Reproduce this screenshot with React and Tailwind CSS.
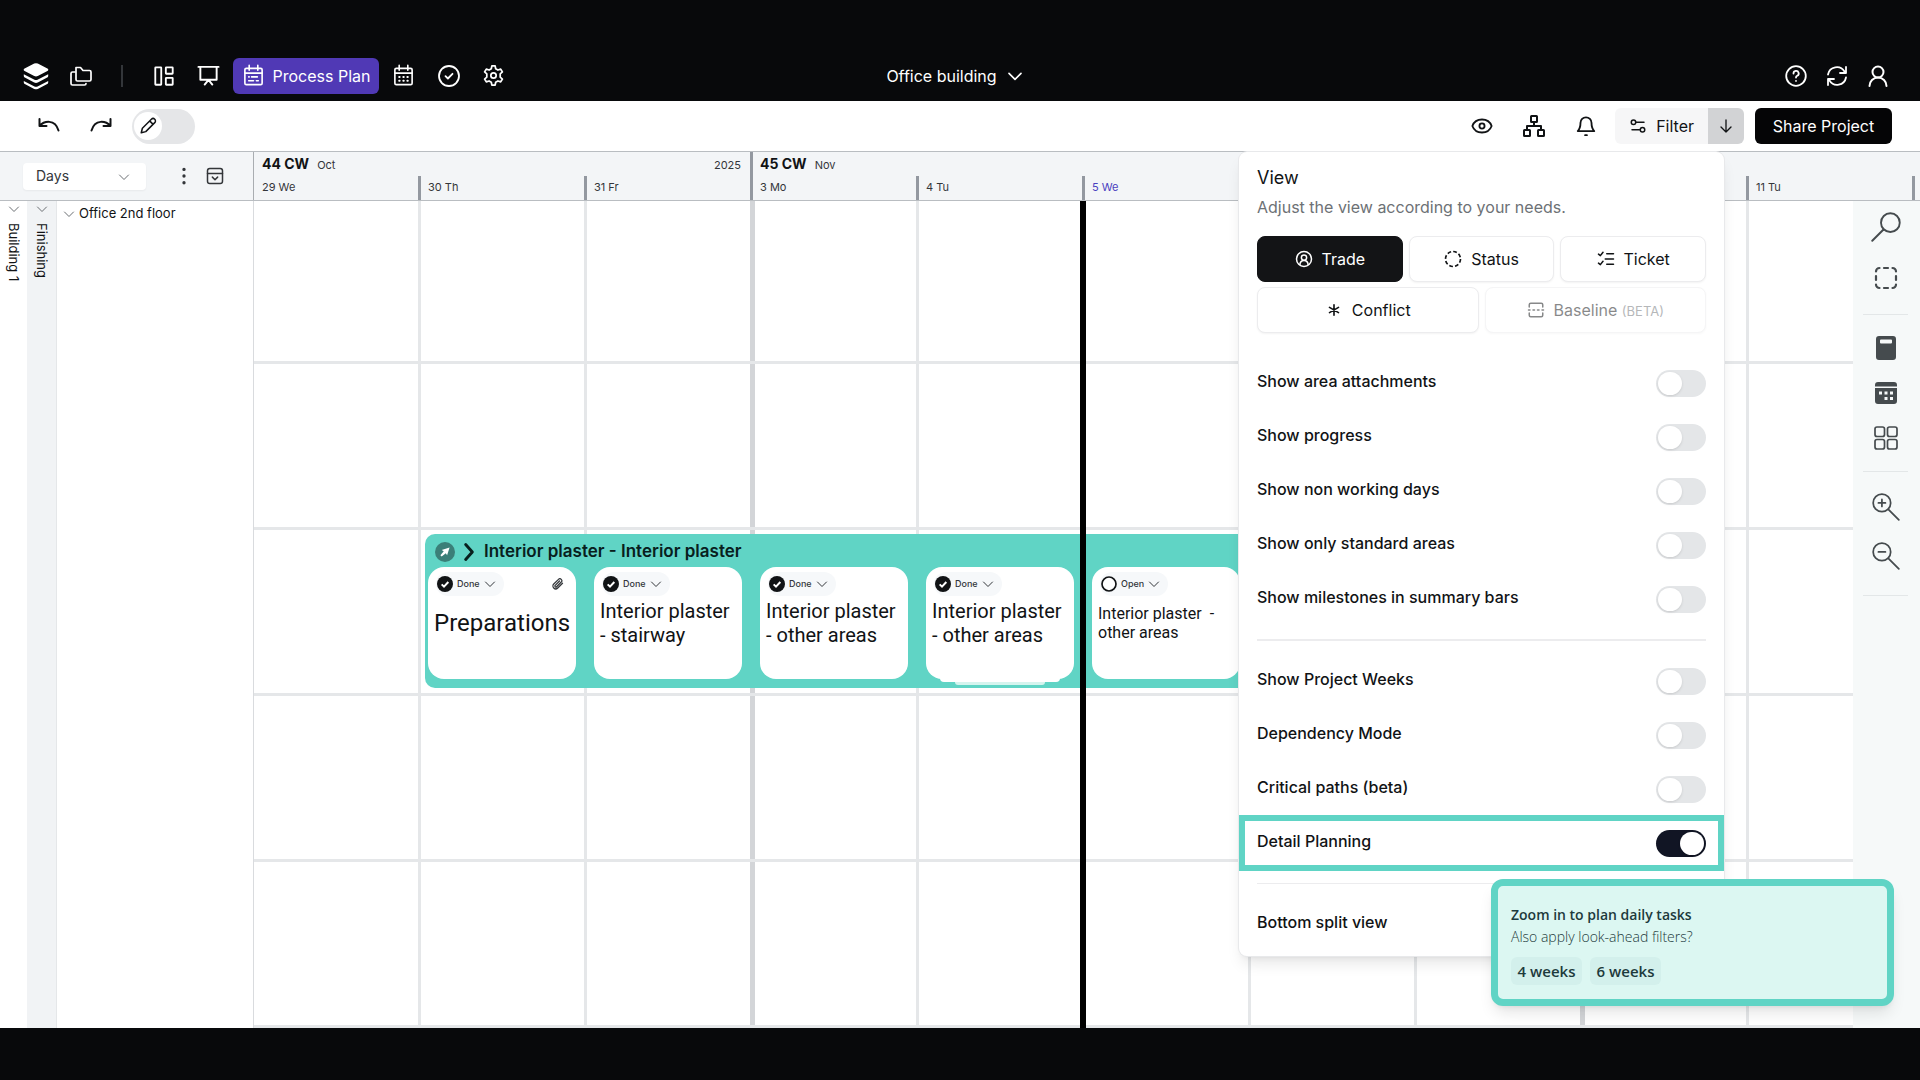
import React, { useState } from 'react';

const days = [
  { id: 29, label: '29 We', week: '44 CW', month: 'Oct' },
  { id: 30, label: '30 Th' },
  { id: 31, label: '31 Fr', year: '2025' },
  { id: 3, label: '3 Mo', week: '45 CW', month: 'Nov', monday: true },
  { id: 4, label: '4 Tu' },
  { id: 5, label: '5 We', today: true },
  { id: 6 },
  { id: 7 },
  { id: 10, monday: true },
  { id: 11, label: '11 Tu' },
  { id: 12 },
];

const rows = [0, 1, 2, 3, 4];

const tasks = [
  { title: 'Preparations', status: 'Done', size: 'large', attachment: true },
  { title: 'Interior plaster - stairway', status: 'Done' },
  { title: 'Interior plaster - other areas', status: 'Done' },
  { title: 'Interior plaster - other areas', status: 'Done', stacked: true },
  { title: 'Interior plaster  - other areas', status: 'Open', size: 'small' },
];

const titleClasses = {
  large: 'pt-[11px] text-2xl leading-8',
  normal: 'pt-[3px] text-xl leading-6',
  small: 'pt-2 text-base leading-[19px]',
};

const viewOptions = [
  { id: 'attachments', label: 'Show area attachments' },
  { id: 'progress', label: 'Show progress' },
  { id: 'nonWorking', label: 'Show non working days' },
  { id: 'standard', label: 'Show only standard areas' },
  { id: 'milestones', label: 'Show milestones in summary bars' },
];

const modeOptions = [
  { id: 'projectWeeks', label: 'Show Project Weeks' },
  { id: 'dependency', label: 'Dependency Mode' },
  { id: 'critical', label: 'Critical paths (beta)' },
  { id: 'detail', label: 'Detail Planning', highlight: true },
];

function Icon({ className = 'size-6', width = 2, children }) {
  return (
    <svg viewBox="0 0 24 24" className={className} fill="none" stroke="currentColor" strokeWidth={width} strokeLinecap="round" strokeLinejoin="round" aria-hidden="true">
      {children}
    </svg>
  );
}

function Chevron({ className, width = 2 }) {
  return (
    <Icon className={className} width={width}>
      <path d="M3 8l9 9 9-9" />
    </Icon>
  );
}

function NavButton({ label, children }) {
  return (
    <button type="button" aria-label={label} className="w-[45px] h-[38px] flex items-center justify-center">
      {children}
    </button>
  );
}

function Header() {
  return (
    <header className="h-[101px] pt-[50px] pl-[23px] pr-[30px] flex items-center bg-[#08090b] text-white text-base">
      <nav className="flex-1 flex items-center">
        <svg viewBox="0 0 26 28" className="w-[26px] h-7 shrink-0" fill="currentColor" aria-hidden="true">
          <path d="M11.2 1.6a4 4 0 0 1 3.6 0l9.6 4.8c1.2.6 1.2 2 0 2.700l-9.600 4.900a4 4 0 0 1-3.600 0L1.600 9.100c-1.200-.7-1.200-2.100 0-2.700z" />
          <path d="M.8 12.200l10.200 5.300a4.300 4.300 0 0 0 4 0l10.200-5.300v1.800c0 .8-.4 1.300-1 1.600l-9.400 4.900a4 4 0 0 1-3.600 0l-9.400-4.900c-.6-.3-1-.8-1-1.600z" />
          <path d="M.8 18.900l10.200 5.300a4.300 4.300 0 0 0 4 0l10.200-5.300v1.600c0 .8-.4 1.300-1 1.600l-9.400 4.800a4 4 0 0 1-3.600 0l-9.400-4.800c-.6-.3-1-.8-1-1.600z" />
        </svg>
        <div className="ml-[9px]">
          <NavButton label="Projects">
            <Icon className="size-6" width={1.700}>
              <path d="M7 3.500h4.500l2.500 3h6.500a1.500 1.500 0 0 1 1.500 1.500v7.500a1.500 1.500 0 0 1-1.500 1.500H8.500A1.500 1.500 0 0 1 7 15.500z" />
              <path d="M6 8H3.500A1.500 1.500 0 0 0 2 9.500v10A1.500 1.500 0 0 0 3.500 21h12a1.500 1.500 0 0 0 1.500-1.500" />
            </Icon>
          </NavButton>
        </div>
        <span className="mx-[18px] w-[2px] h-[22px] bg-[#33363a]" />
        <NavButton label="Dashboard">
          <Icon className="size-[22px]" width={2}>
            <rect x="2.500" y="2.500" width="6.500" height="19" rx="0.500" />
            <rect x="14" y="2.500" width="7.500" height="7" rx="0.500" />
            <rect x="14" y="14" width="7.500" height="7.500" rx="0.500" />
          </Icon>
        </NavButton>
        <NavButton label="Presentation">
          <Icon className="size-[23px]" width={2}>
            <path d="M1.500 3h21M3.500 3v13.500h17V3M12 16.500L8 21.500M12 16.500l4 5" />
          </Icon>
        </NavButton>
        <button type="button" className="mx-[2px] w-[146px] h-[36px] rounded-md bg-[#5039b5] flex items-center justify-center gap-2 whitespace-nowrap">
          <Icon className="size-[23px]" width={1.700}>
            <rect x="3" y="4.500" width="18" height="17" rx="1.500" />
            <path d="M7.500 1.500v5M16.500 1.500v5M3 9.500h18M7 13.500h.5M10 13.500h6M7 17.500h5M15 17.500h2" />
          </Icon>
          Process Plan
        </button>
        <NavButton label="Calendar">
          <Icon className="size-[23px]" width={1.700}>
            <rect x="3" y="4.500" width="18" height="17" rx="1.500" />
            <path d="M7.500 1.500v5M16.500 1.500v5M3 9.500h18" />
            <path d="M7.500 13.500h.5M11.800 13.500h.5M16 13.500h.5M7.500 17.500h.5M11.800 17.500h.5M16 17.500h.5" strokeWidth={2} />
          </Icon>
        </NavButton>
        <NavButton label="Tasks">
          <Icon className="size-6" width={1.800}>
            <circle cx="12" cy="12" r="10" />
            <path d="M8.500 12.200l2.400 2.300 4.600-4.700" />
          </Icon>
        </NavButton>
        <NavButton label="Settings">
          <Icon className="size-[23px]" width={1.800}>
            <path d="M10.300 2h3.400l.6 3 2.300 1.300 2.900-1 1.800 3-2.300 2v3.400l2.300 2-1.800 3-2.900-1-2.300 1.300-.6 3h-3.400l-.6-3-2.300-1.300-2.900 1-1.800-3 2.300-2v-3.400l-2.300-2 1.800-3 2.900 1L9.700 5z" />
            <circle cx="12" cy="12" r="2.800" />
          </Icon>
        </NavButton>
      </nav>
      <button type="button" className="pr-1 flex items-center gap-[10px]">
        Office building
        <Chevron className="size-4" width={2.500} />
      </button>
      <div className="flex-1 flex items-center justify-end gap-[17px]">
        <button type="button" aria-label="Help">
          <Icon className="size-6" width={1.800}>
            <circle cx="12" cy="12" r="9.800" />
            <path d="M9.500 9.500a2.600 2.600 0 1 1 3.700 2.300c-.8.4-1.200.9-1.200 1.700M12 16.800v.1" />
          </Icon>
        </button>
        <button type="button" aria-label="Refresh">
          <Icon className="size-6" width={1.800}>
            <path d="M3 10.500A9 9 0 0 1 19.500 7.500l1.500 1.500M21 3v6h-6" />
            <path d="M21 13.500A9 9 0 0 1 4.500 16.500L3 15M3 21v-6h6" />
          </Icon>
        </button>
        <button type="button" aria-label="Account">
          <Icon className="size-6" width={2}>
            <circle cx="12" cy="8" r="5.500" />
            <path d="M3.500 22a8.500 8.500 0 0 1 17 0" />
          </Icon>
        </button>
      </div>
    </header>
  );
}

function Toolbar() {
  return (
    <div className="h-[50px] px-7 flex items-center justify-between bg-white text-base text-[#111315]">
      <div className="flex items-center">
        <button type="button" aria-label="Undo" className="w-[42px] flex justify-center">
          <Icon className="size-6" width={2}>
            <path d="M2.500 5v7h7M2.500 12C7 7 18 4.500 21.500 16.500" />
          </Icon>
        </button>
        <button type="button" aria-label="Redo" className="ml-[10px] w-[42px] flex justify-center">
          <Icon className="size-6" width={2}>
            <path d="M21.500 5v7h-7M21.500 12C17 7 6 4.500 2.500 16.500" />
          </Icon>
        </button>
        <label className="ml-[10px] w-[63px] h-[35px] p-[2px] rounded-full bg-[#e5e6e8] flex items-center cursor-pointer">
          <input type="checkbox" className="sr-only" aria-label="Edit mode" />
          <span className="size-7 rounded-full bg-white flex items-center justify-center">
            <Icon className="size-[18px]" width={2}>
              <path d="M3 21l1.500-6L16.500 3a2.700 2.700 0 0 1 4.500 4.500L9 19.500zM14.500 5.500l4 4" />
            </Icon>
          </span>
        </label>
      </div>
      <div className="flex items-center">
        <button type="button" aria-label="View" className="w-[52px] flex justify-center">
          <Icon className="size-[22px]" width={2}>
            <path d="M1.500 12c3.500-9.500 17.500-9.500 21 0-3.500 9.500-17.500 9.500-21 0z" />
            <circle cx="12" cy="12" r="2.800" />
          </Icon>
        </button>
        <button type="button" aria-label="Structure" className="w-[52px] flex justify-center">
          <Icon className="size-6" width={2}>
            <rect x="9" y="2" width="6" height="6" rx="0.500" />
            <rect x="2" y="16" width="6" height="6" rx="0.500" />
            <rect x="16" y="16" width="6" height="6" rx="0.500" />
            <path d="M12 8v4M5 16v-4h14v4" />
          </Icon>
        </button>
        <button type="button" aria-label="Notifications" className="w-[52px] flex justify-center">
          <Icon className="size-[22px]" width={2}>
            <path d="M3 17.500C5.500 15 6 13 6 8.500a6 6 0 0 1 12 0c0 4.500.5 6.500 3 9z" />
            <path d="M11 22h2" />
          </Icon>
        </button>
        <button type="button" className="ml-[3px] px-[14px] h-9 rounded-l-md bg-[#f6f6f7] flex items-center gap-[9px]">
          <Icon className="size-[18px]" width={2}>
            <circle cx="6" cy="7" r="3" />
            <path d="M9.500 7H20M4 17h10" />
            <circle cx="18" cy="17" r="3" />
          </Icon>
          Filter
        </button>
        <button type="button" aria-label="Filter options" className="w-9 h-9 rounded-r-md bg-[#d2d3d5] flex items-center justify-center">
          <Icon className="size-4" width={2}>
            <path d="M12 3v18M4.500 13.500L12 21l7.500-7.500" />
          </Icon>
        </button>
        <button type="button" className="ml-[11px] w-[137px] h-9 rounded-md bg-[#050506] text-white whitespace-nowrap">
          Share Project
        </button>
      </div>
    </div>
  );
}

function TimelineHeader() {
  return (
    <div className="h-[50px] flex bg-[#f3f5f7] border-y border-[#b9bdc1] text-[#33363a] text-[11px]">
      <div className="w-[254px] shrink-0 pl-[23px] flex items-center border-r border-[#a9adb1]">
        <div className="relative">
          <select aria-label="Time scale" className="appearance-none w-[123px] h-[27px] pl-[13px] rounded bg-white text-sm shadow-xs">
            <option>Days</option>
            <option>Weeks</option>
          </select>
          <Chevron className="size-3 absolute right-4 top-2 pointer-events-none text-[#6b6f73]" width={2} />
        </div>
        <button type="button" aria-label="More" className="ml-[28px] w-5 flex justify-center">
          <Icon className="size-5" width={4}>
            <path d="M12 4v.1M12 12v.1M12 20v.1" />
          </Icon>
        </button>
        <button type="button" aria-label="Collapse rows" className="ml-3">
          <Icon className="size-[18px]" width={2}>
            <rect x="2" y="2" width="20" height="20" rx="3" />
            <path d="M2 8.500h20M8.500 13.500L12 17l3.500-3.500" />
          </Icon>
        </button>
      </div>
      <div className="flex-1 flex overflow-hidden">
        {days.map((day, i) => (
          <div
            key={day.id}
            className={`shrink-0 flex flex-col ${i === 0 ? 'w-[164px]' : 'w-[166px]'} ${day.monday ? 'border-l-3 border-[#9398a0]' : ''}`}
          >
            <div className={`h-6 pr-[9px] flex items-center gap-2 ${i === 0 ? 'pl-2' : 'pl-[7px]'}`}>
              {day.week && <b className="text-sm text-[#111315]">{day.week}</b>}
              {day.month && <span className="pt-[2px]">{day.month}</span>}
              {day.year && <span className="ml-auto pt-[2px]">{day.year}</span>}
            </div>
            <div
              className={`h-6 pb-[2px] flex items-center ${i === 0 ? 'pl-2' : 'pl-[7px]'} ${day.today ? 'text-[#4a3fc0]' : ''} ${
                i > 0 && !day.monday ? 'border-l-3 border-[#9398a0]' : ''
              }`}
            >
              {day.label}
            </div>
          </div>
        ))}
      </div>
    </div>
  );
}

function TaskCard({ task }) {
  const done = task.status === 'Done';

  return (
    <div className="relative w-[148px] h-[112px] shrink-0 rounded-2xl bg-white">
      <div className="pt-[5px] px-2 flex items-center justify-between">
        <button type="button" className="h-6 pl-[1px] pr-2 rounded-full bg-[#f6f8fa] flex items-center gap-1 font-['Inter',sans-serif] font-medium text-[9px] text-[#33363a]">
          {done ? (
            <svg viewBox="0 0 24 24" className="size-4" aria-hidden="true">
              <circle cx="12" cy="12" r="12" fill="#111315" />
              <path d="M7 12.500l3.500 3.500L17 9" fill="none" stroke="#fff" strokeWidth="3" />
            </svg>
          ) : (
            <svg viewBox="0 0 24 24" className="size-4" aria-hidden="true">
              <circle cx="12" cy="12" r="10.500" fill="#fff" stroke="#111315" strokeWidth="2.500" />
            </svg>
          )}
          {task.status}
          <Chevron className="size-3" width={2} />
        </button>
        {task.attachment && (
          <Icon className="size-3 text-[#33363a] mr-1" width={2.500}>
            <path d="M21 10.500l-9.500 9.500a5.500 5.500 0 0 1-8-8L13 2.700a3.800 3.800 0 0 1 5.500 5.400l-9.300 9.300a1.900 1.900 0 0 1-2.800-2.700L15 6" />
          </Icon>
        )}
      </div>
      <p className={`pl-[6px] pr-1 text-[#111315] whitespace-pre-wrap ${titleClasses[task.size || 'normal']}`}>{task.title}</p>
      {task.stacked && (
        <div className="absolute top-full inset-x-[14px] -mt-px flex flex-col items-center">
          <span className="w-full h-1 rounded-b bg-white" />
          <span className="w-[90px] h-[3px] rounded-b bg-[#d5f4ee]" />
        </div>
      )}
    </div>
  );
}

function Schedule() {
  return (
    <div className="relative flex-1 overflow-hidden bg-white">
      {rows.map((row) => (
        <div key={row} className={`flex border-b-3 border-[#e5e7e9] ${row === 0 ? 'h-[163px]' : 'h-[166px]'}`}>
          {days.map((day, i) => (
            <div
              key={day.id}
              className={`shrink-0 ${i === 0 ? 'w-[164px]' : day.monday ? 'w-[166px] border-l-5 border-[#d3d5d8]' : 'w-[166px] border-l-3 border-[#e5e7e9]'}`}
            />
          ))}
        </div>
      ))}
      {/* summary bar with its daily tasks */}
      <section className="absolute left-[171px] top-[333px] w-[830px] h-[154px] px-[3px] rounded-[10px] bg-[#60d4c5] font-['Roboto',sans-serif]">
        <div className="h-[33px] pt-[2px] pl-[7px] flex items-center text-[#08201d]">
          <svg viewBox="0 0 24 24" className="size-5" aria-hidden="true">
            <circle cx="12" cy="12" r="12" fill="#3b7f78" />
            <path d="M17.500 6.500l-9.500 3 2.500 1.500-4 5 1.500 1.500 5-4 1.500 2.500z" fill="#fff" />
          </svg>
          <Icon className="ml-1 size-5" width={3.500}>
            <path d="M8 3l8 9-8 9" />
          </Icon>
          <h2 className="ml-[5px] font-['Inter',sans-serif] font-semibold text-[17px] whitespace-nowrap">Interior plaster - Interior plaster</h2>
        </div>
        <div className="flex gap-[18px]">
          {tasks.map((task, i) => (
            <TaskCard key={i} task={task} />
          ))}
        </div>
      </section>
      {/* today marker */}
      <span className="absolute left-[826px] inset-y-0 w-[6px] bg-black" />
    </div>
  );
}

function SideTools() {
  return (
    <aside className="w-[67px] shrink-0 pt-[11px] pr-[2px] flex flex-col items-center gap-[21px] bg-[#f6f9f9] text-[#454b4e]">
      <button type="button" aria-label="Search">
        <Icon className="size-[30px]" width={1.500}>
          <circle cx="15.500" cy="8.500" r="7.500" />
          <path d="M10 14l-9 9" />
        </Icon>
      </button>
      <button type="button" aria-label="Select area" className="size-[30px] flex items-center justify-center">
        <Icon className="size-6" width={2.200}>
          <path d="M2 5.500a3.500 3.500 0 0 1 3.500-3.500M10 2h4M18.500 2a3.500 3.500 0 0 1 3.500 3.500M22 10v4M22 18.500a3.500 3.500 0 0 1-3.500 3.500M14 22h-4M5.500 22a3.500 3.500 0 0 1-3.500-3.500M2 14v-4" />
        </Icon>
      </button>
      <hr className="w-[45px] border-[#e3e7e8]" />
      <button type="button" aria-label="Calculator">
        <svg viewBox="0 0 24 24" className="size-6" fill="currentColor" aria-hidden="true">
          <path fillRule="evenodd" d="M5 0h14a3 3 0 0 1 3 3v18a3 3 0 0 1-3 3H5a3 3 0 0 1-3-3V3a3 3 0 0 1 3-3zM7 3.500a1 1 0 0 0-1 1v2a1 1 0 0 0 1 1h10a1 1 0 0 0 1-1v-2a1 1 0 0 0-1-1z" />
        </svg>
      </button>
      <button type="button" aria-label="Calendar settings">
        <svg viewBox="0 0 24 24" className="size-6" aria-hidden="true">
          <path d="M4 1h16a3 3 0 0 1 3 3v1.500H1V4a3 3 0 0 1 3-3zM1 7h22v13a3 3 0 0 1-3 3H4a3 3 0 0 1-3-3z" fill="currentColor" />
          <path d="M5 10.500h3v3H5zM10.500 10.500h3v3h-3zM16 10.500h3v3h-3zM10.500 16h3v3h-3zM16 16h3v3h-3z" fill="#f6f9f9" />
        </svg>
      </button>
      <button type="button" aria-label="Overview">
        <Icon className="size-6" width={1.700}>
          <rect x="1" y="1" width="9.500" height="9.500" rx="2" />
          <rect x="13.500" y="1" width="9.500" height="9.500" rx="2" />
          <rect x="1" y="13.500" width="9.500" height="9.500" rx="2" />
          <rect x="13.500" y="13.500" width="9.500" height="9.500" rx="2" />
        </Icon>
      </button>
      <hr className="w-[45px] border-[#e3e7e8]" />
      <button type="button" aria-label="Zoom in">
        <Icon className="size-7" width={1.500}>
          <circle cx="8.500" cy="8.500" r="7.500" />
          <path d="M14 14l9 9M5.500 8.500h6M8.500 5.500v6" />
        </Icon>
      </button>
      <button type="button" aria-label="Zoom out">
        <Icon className="size-7" width={1.500}>
          <circle cx="8.500" cy="8.500" r="7.500" />
          <path d="M14 14l9 9M5.500 8.500h6" />
        </Icon>
      </button>
      <hr className="mt-1 w-[45px] border-[#e3e7e8]" />
    </aside>
  );
}

function ToggleRow({ option, checked, onChange }) {
  return (
    <div className={`-mx-[18px] px-[18px] flex items-center justify-between ${option.highlight ? '-my-px h-14 ring-6 ring-inset ring-[#60d4c5]' : 'h-[54px]'}`}>
      <label htmlFor={option.id} className="pb-1 font-[450]">{option.label}</label>
      <input
        type="checkbox"
        id={option.id}
        checked={checked}
        onChange={onChange}
        className="appearance-none w-[50px] h-[27px] p-[2px] rounded-full bg-[#e4e6e8] flex checked:bg-[#111524] checked:justify-end before:block before:w-6 before:h-[23px] before:rounded-full before:bg-white before:shadow-sm"
      />
    </div>
  );
}

function ViewPanel() {
  const [mode, setMode] = useState('trade');
  const [enabled, setEnabled] = useState({ detail: true });

  const toggle = (id) => setEnabled({ ...enabled, [id]: !enabled[id] });

  const tabClass = (id) =>
    `h-[46px] rounded-lg border flex items-center justify-center gap-[9px] ${
      mode === id ? 'bg-[#131416] border-[#131416] text-white' : 'bg-white border-[#ececee] shadow-xs'
    }`;

  return (
    <section className="absolute right-[196px] top-[1px] w-[485px] px-[18px] pt-[13px] pb-[5px] rounded-lg bg-white shadow-lg ring-1 ring-[#e8e9eb] text-base text-[#111315]">
      <h2 className="text-lg leading-[26px]">View</h2>
      <p className="mt-1 mb-[17px] leading-6 text-[#6d7175]">Adjust the view according to your needs.</p>
      <div className="mb-[23px] grid grid-cols-6 gap-x-[6px] gap-y-[5px]">
        <button type="button" onClick={() => setMode('trade')} className={`col-span-2 ${tabClass('trade')}`}>
          <Icon className="size-[18px]" width={2}>
            <circle cx="12" cy="12" r="10" />
            <circle cx="12" cy="10" r="3.500" />
            <path d="M6.500 19.500c.5-7.500 10.500-7.500 11 0" />
          </Icon>
          Trade
        </button>
        <button type="button" onClick={() => setMode('status')} className={`col-span-2 ${tabClass('status')}`}>
          <svg viewBox="0 0 24 24" className="size-[18px]" fill="none" stroke="currentColor" strokeWidth="2.200" aria-hidden="true">
            <circle cx="12" cy="12" r="10" strokeDasharray="5 2.850" />
          </svg>
          Status
        </button>
        <button type="button" onClick={() => setMode('ticket')} className={`col-span-2 ${tabClass('ticket')}`}>
          <Icon className="size-[18px]" width={2}>
            <path d="M2 5.500l2.500 2L8 3M2 17.500l2.500 2L8 15M13 5h9M11 12h11M13 19h9" />
          </Icon>
          Ticket
        </button>
        <button type="button" onClick={() => setMode('conflict')} className={`col-span-3 ${tabClass('conflict')}`}>
          <Icon className="size-[18px]" width={2.200}>
            <path d="M12 5v14M6 8.500l12 7M18 8.500l-12 7" />
          </Icon>
          Conflict
        </button>
        <button type="button" disabled className={`col-span-3 opacity-50 ${tabClass('baseline')}`}>
          <Icon className="size-[18px]" width={2}>
            <path d="M3 8V5a2 2 0 0 1 2-2h14a2 2 0 0 1 2 2v3M3 16v3a2 2 0 0 0 2 2h14a2 2 0 0 0 2-2v-3M2 12h2M8 12h2M14 12h2M20 12h2" />
          </Icon>
          <span>
            Baseline <span className="text-[13px] text-[#6d7175]">(BETA)</span>
          </span>
        </button>
      </div>
      {viewOptions.map((option) => (
        <ToggleRow key={option.id} option={option} checked={!!enabled[option.id]} onChange={() => toggle(option.id)} />
      ))}
      <hr className="my-[13px] border-t-2 border-[#ececee]" />
      {modeOptions.map((option) => (
        <ToggleRow key={option.id} option={option} checked={!!enabled[option.id]} onChange={() => toggle(option.id)} />
      ))}
      <hr className="my-[13px] border-[#ececee]" />
      <ToggleRow option={{ id: 'split', label: 'Bottom split view' }} checked={!!enabled.split} onChange={() => toggle('split')} />
    </section>
  );
}

function ZoomHint() {
  return (
    <div role="status" className="absolute right-[26px] top-[728px] w-[403px] h-[127px] pl-[13px] pt-[19px] rounded-xl border-7 border-[#60d4c5] bg-[#dcf7f2] shadow-lg font-['Open_Sans',sans-serif] text-[#1d3a3c]">
      <p className="text-sm leading-5 font-semibold">Zoom in to plan daily tasks</p>
      <p className="text-sm leading-6 font-light">Also apply look-ahead filters?</p>
      <div className="mt-2 flex gap-2">
        <button type="button" className="w-[71px] h-7 rounded-md bg-[#d3f0ec] text-[15px] font-semibold">4 weeks</button>
        <button type="button" className="w-[71px] h-7 rounded-md bg-[#d3f0ec] text-[15px] font-semibold">6 weeks</button>
      </div>
    </div>
  );
}

export default function App() {
  return (
    <div className="min-h-screen flex flex-col bg-[#08090b] font-['Inter',sans-serif]">
      <Header />
      <Toolbar />
      <main className="relative">
        <TimelineHeader />
        <div className="flex overflow-hidden bg-white">
          <div className="w-[254px] shrink-0 flex border-r border-[#d9dbde] text-[13px] text-[#111315]">
            <div className="w-[27px] pt-[2px] flex flex-col items-center gap-2">
              <Chevron className="size-3 text-[#6b6f73]" width={2} />
              <span className="[writing-mode:vertical-rl]">Building 1</span>
            </div>
            <div className="w-[30px] pt-[2px] flex flex-col items-center gap-2 bg-[#f1f3f5] border-r border-[#e5e7e9]">
              <Chevron className="size-3 text-[#6b6f73]" width={2} />
              <span className="[writing-mode:vertical-rl]">Finishing</span>
            </div>
            <div className="pl-[6px] h-6 pt-[2px] flex items-center gap-1">
              <Chevron className="size-3 text-[#6b6f73]" width={2} />
              Office 2nd floor
            </div>
          </div>
          <Schedule />
          <SideTools />
        </div>
        <ViewPanel />
        <ZoomHint />
      </main>
    </div>
  );
}
